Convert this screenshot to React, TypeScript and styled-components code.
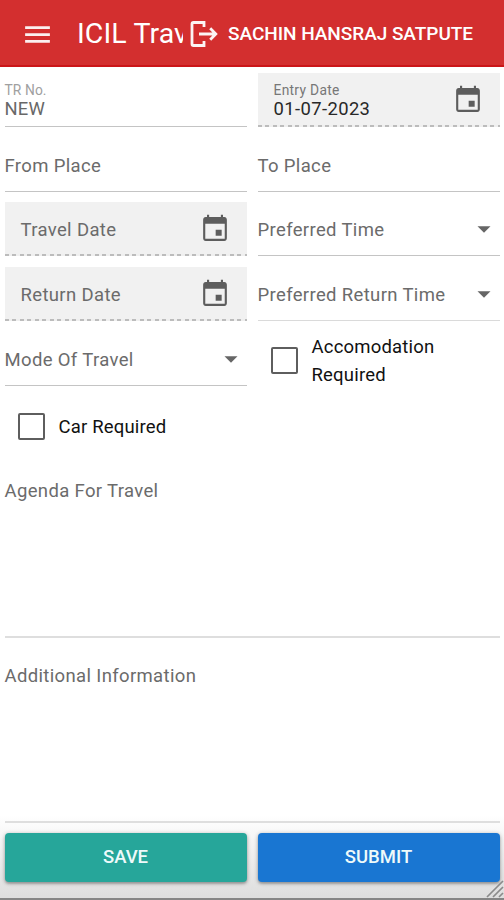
import React from "react";
import styled, { createGlobalStyle } from "styled-components";

const GlobalStyle = createGlobalStyle`
  * { box-sizing: border-box; }
  html, body { margin: 0; height: 100%; overflow: hidden; }
  body { font-family: Roboto, "Noto Sans", sans-serif; background: #fff; }
`;

const Page = styled.div`
  height: 900px;
  width: 504px;
  display: flex;
  flex-direction: column;
  background: linear-gradient(to bottom, #fff 0, #fff 815px, #dedede 896px);
  border-bottom: 2px solid #858585;
  position: relative;
`;

const Toolbar = styled.header`
  height: 67px;
  flex: none;
  display: flex;
  align-items: center;
  padding: 3px 0 0 21px;
  background: #d32f2f;
  border-bottom: 2px solid #cb1518;
  color: #fff;
`;

const Title = styled.div`
  width: 106px;
  margin-left: 23px;
  overflow: hidden;
  white-space: nowrap;
  font-size: 28.5px;
  line-height: 36px;
  letter-spacing: 0.1px;
`;

const LogoutButton = styled.button`
  display: flex;
  align-items: center;
  gap: 10px;
  margin: 0 0 0 7px;
  padding: 0;
  border: 0;
  background: none;
  color: #fff;
  font: 500 19px/30px Roboto, sans-serif;
  letter-spacing: -0.04px;
  white-space: nowrap;
`;

const Form = styled.form`
  display: grid;
  grid-template-columns: 242px 242px;
  grid-template-rows: 54px 54px 54px 54px 54px 55px 176px 174px 49px;
  column-gap: 11px;
  row-gap: 10.7px;
  padding: 6px 0 0 4.5px;
`;

const Field = styled.div<{ $filled?: boolean; $light?: boolean }>`
  display: flex;
  align-items: center;
  justify-content: space-between;
  padding: ${(p) => (p.$filled ? "0 16px 1px 16px" : "1px 3px 0 0")};
  background: ${(p) =>
    p.$filled
      ? "repeating-linear-gradient(to right, #bcbcbc 0 3.8px, #efefef 3.8px 7.5px) left bottom / 100% 2px no-repeat, #f1f1f1"
      : "transparent"};
  border-bottom: ${(p) => (p.$filled ? "0" : "1.5px solid " + (p.$light ? "#dadada" : "#c4c4c4"))};
`;

const Stack = styled.div`
  display: flex;
  flex-direction: column;
`;

const Caption = styled.span<{ $dim?: boolean }>`
  font-size: 13.8px;
  line-height: 18px;
  letter-spacing: ${(p) => (p.$dim ? "0.1px" : "0.3px")};
  color: ${(p) => (p.$dim ? "#a0a0a0" : "#777")};
`;

const Value = styled.span<{ $dim?: boolean }>`
  font-size: 18.4px;
  line-height: 20px;
  letter-spacing: ${(p) => (p.$dim ? "0.2px" : "0.4px")};
  color: ${(p) => (p.$dim ? "#686868" : "#282828")};
`;

const Label = styled.span`
  font-size: 18.5px;
  line-height: 24px;
  padding-top: 2px;
  letter-spacing: 0.35px;
  color: #6b6b6b;
  white-space: nowrap;
`;

const Check = styled.label<{ $wide?: boolean }>`
  display: flex;
  align-items: center;
  gap: 14px;
  padding-left: 13px;
  margin-top: ${(p) => (p.$wide ? "5px" : "3px")};
  grid-column: ${(p) => (p.$wide ? "1 / -1" : "auto")};
  font-size: 18.5px;
  line-height: 28px;
  letter-spacing: ${(p) => (p.$wide ? "0.17px" : "0.2px")};
  color: #111;
`;

const CheckText = styled.span`
  padding-top: 1px;
`;

const Box = styled.span`
  width: 27px;
  height: 27px;
  flex: none;
  border: 2px solid #5e5e5e;
  border-radius: 2px;
`;

const TextArea = styled.div<{ $inset: number }>`
  grid-column: 1 / -1;
  padding-top: ${(p) => p.$inset}px;
  border-bottom: 2px solid #dedede;
`;

const Action = styled.button<{ $color: string }>`
  height: 49px;
  margin-top: -0.7px;
  padding: 0;
  border: 0;
  border-radius: 4px;
  background: ${(p) => p.$color};
  box-shadow: 0 1px 4px rgba(0, 0, 0, 0.32), 0 2px 2px rgba(0, 0, 0, 0.15);
  color: #eefafa;
  font: 500 18.5px/48px Roboto, sans-serif;
  letter-spacing: 0;
`;

const ResizeGrip = styled.svg`
  position: absolute;
  right: 0;
  bottom: 0;
`;

const MenuIcon = () => (
  <svg width="33" height="33" viewBox="0 0 24 24" fill="#fff" opacity=".93">
    <path d="M3 18h18v-2H3v2zm0-5h18v-2H3v2zm0-7v2h18V6H3z" />
  </svg>
);

const LogoutIcon = () => (
  <svg width="28" height="28" viewBox="0 0 28 28" fill="none" stroke="#fff" strokeWidth="2.8" opacity=".95">
    <path d="M14 7V2.5H3.5q-1.5 0-1.5 1.5v20q0 1.5 1.5 1.5H14V21" />
    <path d="M9 14h17M20.2 8.3l5.6 5.7-5.6 5.7" />
  </svg>
);

const CalendarIcon = () => (
  <svg width="32" height="32" viewBox="0 0 24 24" fill="#5d5d5d">
    <path d="M17 12.5h-4.5V17H17v-4.5zM16.4 1.3V3H7.6V1.3H6V3H5c-1.11 0-1.9.9-1.9 2v14c0 1.1.8 2 1.9 2h14c1.1 0 1.9-.9 1.9-2V5c0-1.1-.8-2-1.9-2h-1V1.3h-1.6zM19.3 19.4H4.7V8h14.6v11.4z" />
  </svg>
);

const Caret = () => (
  <svg width="26" height="26" viewBox="0 0 24 24" fill="#666">
    <path d="M6 9.5l6 6 6-6z" />
  </svg>
);

const DateField = ({ label, value }: { label: string; value?: string }) => (
  <Field $filled>
    {value ? (
      <Stack>
        <Caption>{label}</Caption>
        <Value>{value}</Value>
      </Stack>
    ) : (
      <Label>{label}</Label>
    )}
    <CalendarIcon />
  </Field>
);

const SelectField = ({ label, light }: { label: string; light?: boolean }) => (
  <Field $light={light}>
    <Label>{label}</Label>
    <Caret />
  </Field>
);

export default function App() {
  return (
    <>
      <GlobalStyle />
      <Page>
        <Toolbar>
          <MenuIcon />
          <Title>ICIL Travel</Title>
          <LogoutButton>
            <LogoutIcon />
            SACHIN HANSRAJ SATPUTE
          </LogoutButton>
        </Toolbar>
        <Form>
          <Field>
            <Stack>
              <Caption $dim>TR No.</Caption>
              <Value $dim>NEW</Value>
            </Stack>
          </Field>
          <DateField label="Entry Date" value="01-07-2023" />
          <Field><Label>From Place</Label></Field>
          <Field><Label>To Place</Label></Field>
          <DateField label="Travel Date" />
          <SelectField label="Preferred Time" />
          <DateField label="Return Date" />
          <SelectField label="Preferred Return Time" light />
          <SelectField label="Mode Of Travel" />
          <Check><Box /><CheckText>Accomodation Required</CheckText></Check>
          <Check $wide><Box /><CheckText>Car Required</CheckText></Check>
          <TextArea $inset={17}><Label>Agenda For Travel</Label></TextArea>
          <TextArea $inset={15.5}><Label>Additional Information</Label></TextArea>
          <Action type="button" $color="#26a69a">SAVE</Action>
          <Action type="button" $color="#1976d2">SUBMIT</Action>
        </Form>
        <ResizeGrip width="18" height="18" viewBox="0 0 18 18" stroke="#8b8b8b" strokeWidth="1.7">
          <path d="M1 17L17 1M7 17L17 7M13 17l4-4" />
        </ResizeGrip>
      </Page>
    </>
  );
}
